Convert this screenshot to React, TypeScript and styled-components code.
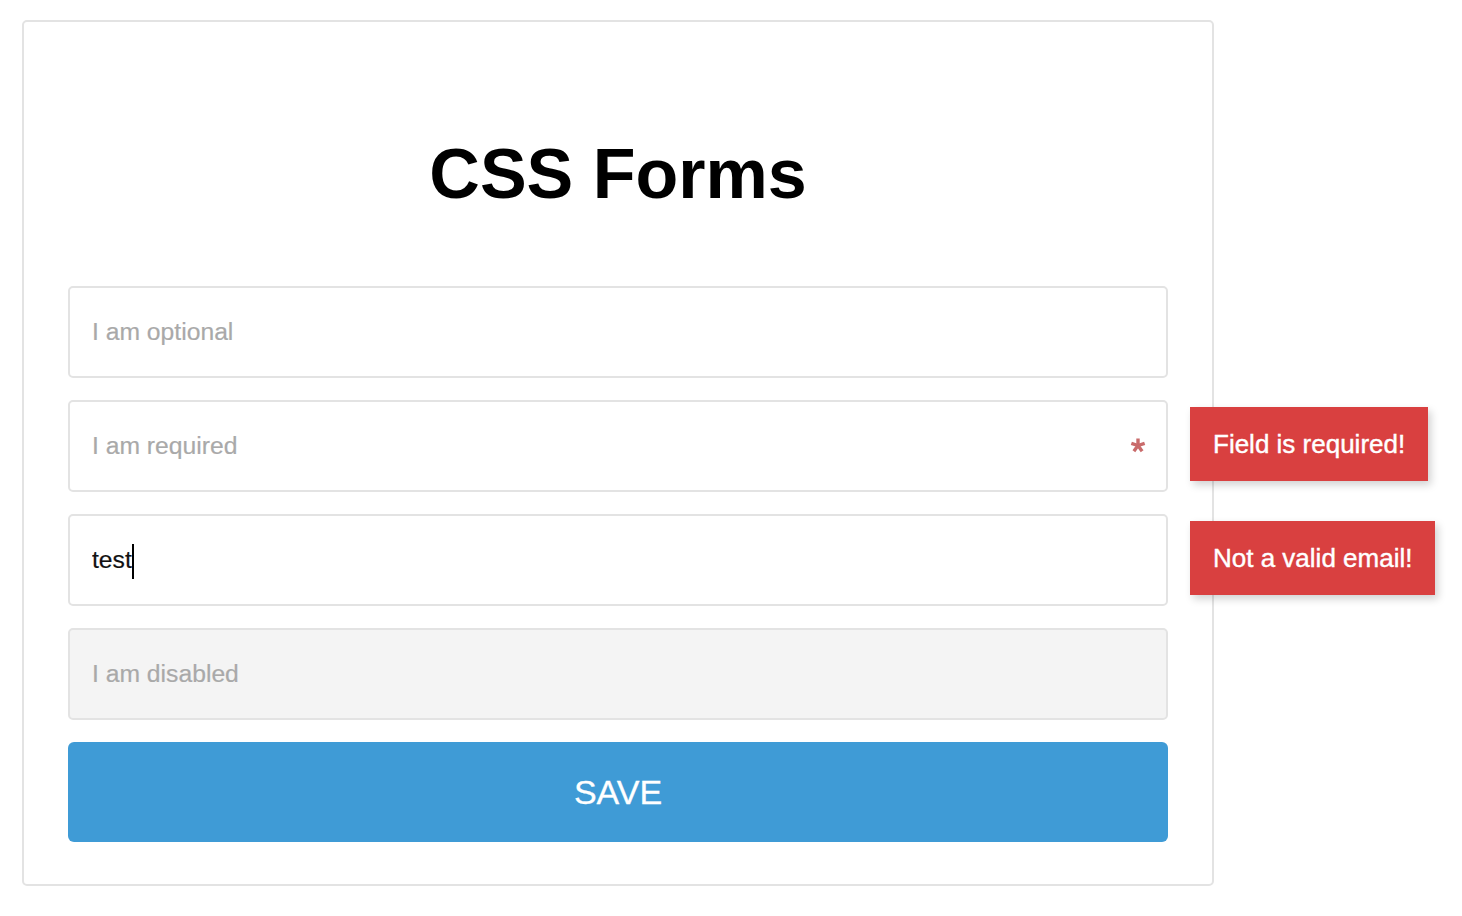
import React from "react";
import styled, { createGlobalStyle } from "styled-components";

const GlobalStyle = createGlobalStyle`
  html, body { margin: 0; padding: 0; background: #ffffff; }
  body { font-family: "Liberation Sans", Arial, Helvetica, sans-serif; }
  * { box-sizing: border-box; }
`;

const Page = styled.div`
  padding: 20px 22px;
`;

const Card = styled.div`
  width: 1192px;
  border: 2px solid #e3e3e3;
  border-radius: 5px;
  padding: 0 44px 42px;
  background: #fff;
`;

const Title = styled.h1`
  margin: 111px 0 71px;
  font-size: 70px;
  line-height: 82px;
  font-weight: 700;
  text-align: center;
  color: #000;
`;

const Form = styled.form`
  display: flex;
  flex-direction: column;
  gap: 22px;
`;

const Field = styled.div`
  position: relative;
  width: 100%;
`;

const Input = styled.input`
  display: block;
  width: 100%;
  height: 92px;
  padding: 0 22px;
  border: 2px solid #e3e3e3;
  border-radius: 5px;
  font-family: "Liberation Sans", Arial, Helvetica, sans-serif;
  font-size: 24.7px;
  color: #111;
  background: #fff;
  outline: none;
  -webkit-text-stroke: 0.2px currentColor;
  &::placeholder { color: #a9a9a9; opacity: 1; }
  &:disabled { background: #f4f4f4; color: #a9a9a9; }
`;

const Caret = styled.span`
  position: absolute;
  left: 64px;
  top: 30px;
  width: 2px;
  height: 35px;
  background: #000;
`;

const Asterisk = styled.svg`
  position: absolute;
  right: 22px;
  top: 37px;
  width: 16px;
  height: 16px;
`;

const Tooltip = styled.div`
  position: absolute;
  left: calc(100% + 22px);
  top: 7px;
  height: 74px;
  display: flex;
  align-items: center;
  padding: 0 23px;
  background: #d94040;
  color: #fff;
  font-size: 26px;
  white-space: nowrap;
  -webkit-text-stroke: 0.4px #fff;
  box-shadow: 3px 4px 8px rgba(0, 0, 0, 0.18);
`;

const SaveButton = styled.button`
  height: 100px;
  width: 100%;
  border: none;
  border-radius: 6px;
  background: #3f9bd6;
  color: #fff;
  font-family: "Liberation Sans", Arial, Helvetica, sans-serif;
  font-size: 34px;
  -webkit-text-stroke: 0.3px #fff;
  cursor: pointer;
`;

const arms = [-90, -18, 54, 126, 198];

export default function App() {
  return (
    <>
      <GlobalStyle />
      <Page>
        <Card>
          <Title>CSS Forms</Title>
          <Form onSubmit={(e) => e.preventDefault()}>
            <Field>
              <Input placeholder="I am optional" />
            </Field>
            <Field>
              <Input placeholder="I am required" />
              <Asterisk viewBox="0 0 16 16">
                {arms.map((a) => {
                  const r = (a * Math.PI) / 180;
                  return (
                    <line
                      key={a}
                      x1={8}
                      y1={8.5}
                      x2={8 + 7 * Math.cos(r)}
                      y2={8.5 + 7 * Math.sin(r)}
                      stroke="#c96b6b"
                      strokeWidth={3.4}
                    />
                  );
                })}
              </Asterisk>
              <Tooltip>Field is required!</Tooltip>
            </Field>
            <Field>
              <Input defaultValue="test" readOnly />
              <Caret />
              <Tooltip>Not a valid email!</Tooltip>
            </Field>
            <Field>
              <Input placeholder="I am disabled" disabled />
            </Field>
            <SaveButton type="submit">SAVE</SaveButton>
          </Form>
        </Card>
      </Page>
    </>
  );
}
